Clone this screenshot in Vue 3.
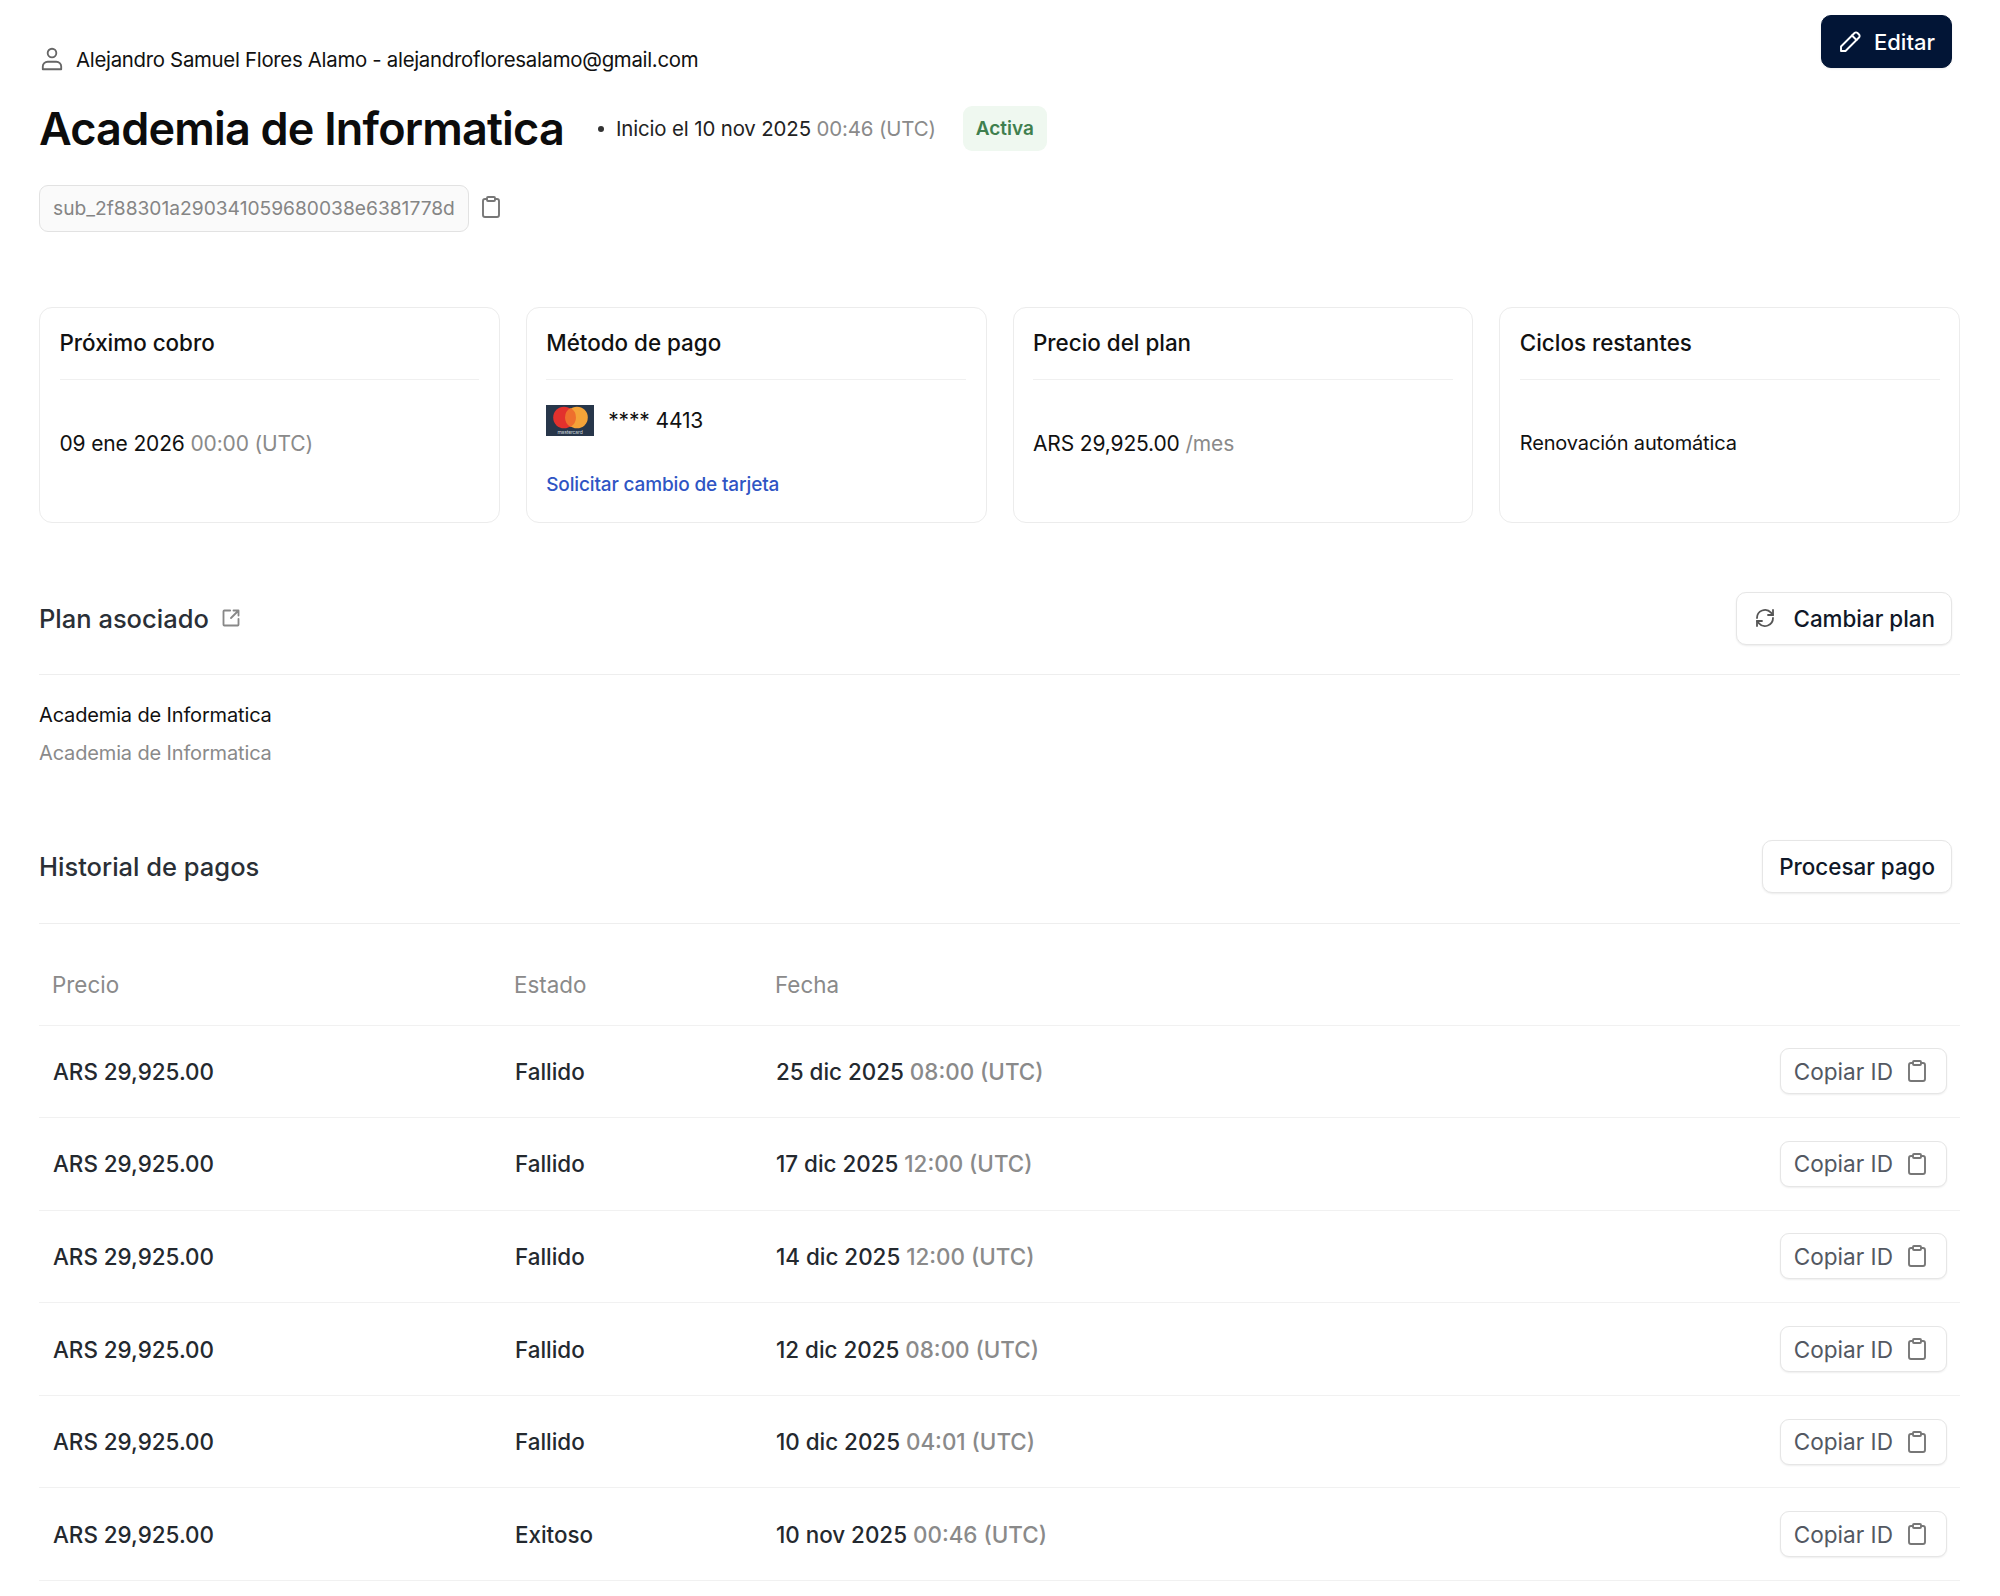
<template>
  <div class="page">
    <header class="top">
      <div class="top-left">
        <div class="customer">
          <svg class="customer-icon" viewBox="0 0 24 24" fill="none" stroke="currentColor" stroke-width="1.7" stroke-linecap="round" stroke-linejoin="round">
            <circle cx="12" cy="6.500" r="4" />
            <path d="M3.500 21.500v-2.500A4.500 4.500 0 0 1 8 14.500h8a4.500 4.500 0 0 1 4.500 4.500v2.500z" />
          </svg>
          <span>Alejandro Samuel Flores Alamo - alejandrofloresalamo@gmail.com</span>
        </div>
        <div class="title-row">
          <h1>Academia de Informatica</h1>
          <span class="dot"></span>
          <span class="since">Inicio el 10 nov 2025 <span class="muted">00:46 (UTC)</span></span>
          <span class="badge">Activa</span>
        </div>
        <div class="sub-row">
          <span class="sub-id">sub_2f88301a290341059680038e6381778d</span>
          <svg class="clip" viewBox="0 0 24 24" fill="none" stroke="currentColor" stroke-width="1.9" stroke-linejoin="round">
            <path d="M16 4h2a2 2 0 0 1 2 2v14a2 2 0 0 1-2 2H6a2 2 0 0 1-2-2V6a2 2 0 0 1 2-2h2" />
            <rect x="8" y="2" width="8" height="4" rx="1" />
          </svg>
        </div>
      </div>
      <button class="btn btn-dark">
        <svg class="btn-icon" viewBox="0 0 24 24" fill="none" stroke="currentColor" stroke-width="1.9" stroke-linecap="round" stroke-linejoin="round">
          <path d="M3 21v-4.500L16.500 3a2.100 2.100 0 0 1 3 0l1.500 1.500a2.100 2.100 0 0 1 0 3L7.500 21z" />
          <path d="M14 5.500l4.500 4.500" />
        </svg>
        Editar
      </button>
    </header>

    <section class="cards">
      <div class="card">
        <div class="card-title">Próximo cobro</div>
        <div class="card-body">
          <div>09 ene 2026 <span class="muted">00:00 (UTC)</span></div>
        </div>
      </div>
      <div class="card">
        <div class="card-title">Método de pago</div>
        <div class="card-body card-body-pay">
          <div class="pay-line">
            <svg class="mc" viewBox="0 0 48 31">
              <rect width="48" height="31" fill="#27364a" />
              <circle cx="18" cy="12.500" r="10.800" fill="#e2312d" />
              <circle cx="31" cy="12.500" r="10.800" fill="#f4a338" />
              <path d="M24.500 3.100a10.800 10.800 0 0 1 0 18.800a10.800 10.800 0 0 1 0-18.800z" fill="#ee6f2d" />
              <text class="mc-text" x="24" y="29" text-anchor="middle">mastercard</text>
            </svg>
            <span>**** 4413</span>
          </div>
          <a class="link">Solicitar cambio de tarjeta</a>
        </div>
      </div>
      <div class="card">
        <div class="card-title">Precio del plan</div>
        <div class="card-body">
          <div>ARS 29,925.00 <span class="muted">/mes</span></div>
        </div>
      </div>
      <div class="card">
        <div class="card-title">Ciclos restantes</div>
        <div class="card-body card-body-small">
          <div>Renovación automática</div>
        </div>
      </div>
    </section>

    <section class="plan">
      <div class="section-head">
        <h2>
          Plan asociado
          <svg class="ext" viewBox="0 0 24 24" fill="none" stroke="currentColor" stroke-width="2.200" stroke-linecap="round" stroke-linejoin="round">
            <path d="M11 3H4a1 1 0 0 0-1 1v16a1 1 0 0 0 1 1h16a1 1 0 0 0 1-1v-7" />
            <path d="M12 12l9-9M15 3h6v6" />
          </svg>
        </h2>
        <button class="btn btn-change">
          <svg class="btn-icon btn-icon-grey" viewBox="0 0 24 24" fill="none" stroke="currentColor" stroke-width="1.8" stroke-linecap="round" stroke-linejoin="round">
            <path d="M4 12a8 8 0 0 1 14-5.300L20 9" />
            <path d="M20 12a8 8 0 0 1-14 5.300L4 15" />
            <path d="M20 4v5h-5M4 20v-5h5" />
          </svg>
          Cambiar plan
        </button>
      </div>
      <div class="plan-name">Academia de Informatica</div>
      <div class="plan-desc">Academia de Informatica</div>
    </section>

    <section class="history">
      <div class="section-head">
        <h2>Historial de pagos</h2>
        <button class="btn">Procesar pago</button>
      </div>
      <div class="table">
        <div class="row row-head">
          <span>Precio</span>
          <span>Estado</span>
          <span>Fecha</span>
        </div>
        <div v-for="p in payments" :key="p.date" class="row">
          <span>ARS 29,925.00</span>
          <span>{{ p.status }}</span>
          <span>{{ p.date }} <span class="muted">{{ p.time }} (UTC)</span></span>
          <button class="btn-copy">
            Copiar ID
            <svg class="clip" viewBox="0 0 24 24" fill="none" stroke="currentColor" stroke-width="1.9" stroke-linejoin="round">
              <path d="M16 4h2a2 2 0 0 1 2 2v14a2 2 0 0 1-2 2H6a2 2 0 0 1-2-2V6a2 2 0 0 1 2-2h2" />
              <rect x="8" y="2" width="8" height="4" rx="1" />
            </svg>
          </button>
        </div>
      </div>
    </section>
  </div>
</template>

<script setup>
const payments = [
  { status: 'Fallido', date: '25 dic 2025', time: '08:00' },
  { status: 'Fallido', date: '17 dic 2025', time: '12:00' },
  { status: 'Fallido', date: '14 dic 2025', time: '12:00' },
  { status: 'Fallido', date: '12 dic 2025', time: '08:00' },
  { status: 'Fallido', date: '10 dic 2025', time: '04:01' },
  { status: 'Exitoso', date: '10 nov 2025', time: '00:46' }
]
</script>

<style scoped>
.page {
  box-sizing: border-box;
  width: 2000px;
  height: 1596px;
  padding: 15px 40px 0 39px;
  background: #fff;
  color: #111;
  font-family: Inter, "Liberation Sans", sans-serif;
  font-size: 20px;
  overflow: hidden;
}

.top {
  display: flex;
  justify-content: space-between;
  align-items: flex-start;
}

.top-left {
  padding-top: 29px;
}

.customer {
  display: flex;
  align-items: center;
  gap: 11px;
  height: 30px;
  font-size: 20.400px;
  letter-spacing: -0.3px;
}

.customer-icon {
  width: 26px;
  height: 26px;
  color: #666;
}

.title-row {
  display: flex;
  align-items: center;
  margin-top: 31.500px;
  height: 46px;
}

h1 {
  margin: 0;
  font-size: 45px;
  font-weight: 600;
  letter-spacing: -0.8px;
  color: #0c0c0c;
}

.dot {
  width: 6px;
  height: 6px;
  margin-left: 34px;
  margin-right: 12px;
  border-radius: 50%;
  background: #333;
}

.since {
  font-size: 20.400px;
  letter-spacing: -0.13px;
  color: #222;
}

.muted {
  color: #8a8a8a;
}

.badge {
  margin-left: 27px;
  padding: 10.500px 13px;
  border-radius: 9px;
  background: #eff8f0;
  color: #3f7f4e;
  font-size: 19px;
  font-weight: 600;
  line-height: 24px;
}

.sub-row {
  display: flex;
  align-items: center;
  gap: 10px;
  margin-top: 33px;
}

.sub-id {
  padding: 0 13px;
  height: 45px;
  line-height: 45px;
  border: 1px solid #e2e2e2;
  border-radius: 9px;
  background: #fafafa;
  color: #858585;
  font-size: 19.200px;
}

.sub-row .clip {
  margin-bottom: 3px;
}

.clip {
  width: 24px;
  height: 24px;
  color: #777;
}

.btn {
  display: inline-flex;
  align-items: center;
  gap: 12px;
  height: 53px;
  margin-right: 8px;
  padding: 0 16px;
  border: 1px solid #e6e6e6;
  border-radius: 10px;
  background: #fff;
  color: #101828;
  font-family: inherit;
  font-size: 22.400px;
  font-weight: 500;
  box-shadow: 0 1px 2px rgba(0, 0, 0, 0.08);
}

.btn-dark {
  background: #021536;
  border-color: #021536;
  color: #fff;
  font-size: 22px;
}

.btn-change {
  gap: 16px;
}

.btn-icon {
  width: 24px;
  height: 24px;
}

.btn-icon-grey {
  color: #555;
}

.cards {
  display: grid;
  grid-template-columns: repeat(4, 1fr);
  gap: 26px;
  margin-top: 75.500px;
}

.card {
  box-sizing: border-box;
  display: flex;
  flex-direction: column;
  height: 216px;
  padding: 0 19.500px;
  border: 1px solid #ececec;
  border-radius: 13px;
}

.card-title {
  padding: 21px 0 23px;
  border-bottom: 1px solid #f0f0f0;
  font-size: 22.400px;
  font-weight: 500;
  line-height: 27px;
}

.card-body {
  flex: 1;
  display: flex;
  align-items: center;
  padding-bottom: 16px;
  font-size: 21px;
  letter-spacing: -0.15px;
}

.card-body-small {
  font-size: 20px;
}

.card-body-pay {
  flex-direction: column;
  align-items: flex-start;
  justify-content: flex-start;
  padding-top: 25px;
  padding-bottom: 0;
}

.pay-line {
  display: flex;
  align-items: center;
  gap: 14px;
}

.mc {
  width: 48px;
  height: 31px;
}

.mc-text {
  fill: #cfd6dd;
  font-family: Inter, sans-serif;
  font-size: 5px;
}

.link {
  margin-top: 37px;
  color: #2f55c4;
  font-size: 19px;
  font-weight: 500;
}

.section-head {
  display: flex;
  justify-content: space-between;
  align-items: center;
  padding-bottom: 29.500px;
  border-bottom: 1px solid #eee;
}

h2 {
  display: flex;
  align-items: center;
  gap: 12px;
  margin: 0;
  font-size: 25.500px;
  font-weight: 500;
  color: #2a2f36;
}

.ext {
  width: 20px;
  height: 20px;
  color: #888;
}

.plan {
  margin-top: 68.500px;
}

.plan-name {
  margin-top: 28px;
  font-size: 20px;
  line-height: 25px;
  letter-spacing: -0.15px;
}

.plan-desc {
  margin-top: 13px;
  font-size: 20px;
  line-height: 25px;
  letter-spacing: -0.15px;
  color: #8a8a8a;
}

.history {
  margin-top: 74px;
}

.row {
  display: grid;
  grid-template-columns: 462px 261px 1fr auto;
  align-items: center;
  height: 92.600px;
  box-sizing: border-box;
  padding: 0 13px 0 14px;
  border-bottom: 1px solid #f1f1f1;
  font-size: 22.400px;
  font-weight: 500;
  color: #24292f;
}

.row-head {
  height: 102px;
  padding: 20px 13px 0;
  font-weight: 400;
  color: #8a8a8a;
}

.btn-copy {
  display: inline-flex;
  align-items: center;
  gap: 12px;
  height: 46px;
  padding: 0 17px 0 13px;
  border: 1px solid #e6e6e6;
  border-radius: 9px;
  background: #fff;
  color: #535862;
  font-family: inherit;
  font-size: 22.600px;
  font-weight: 400;
  box-shadow: 0 1px 2px rgba(0, 0, 0, 0.07);
}
</style>
